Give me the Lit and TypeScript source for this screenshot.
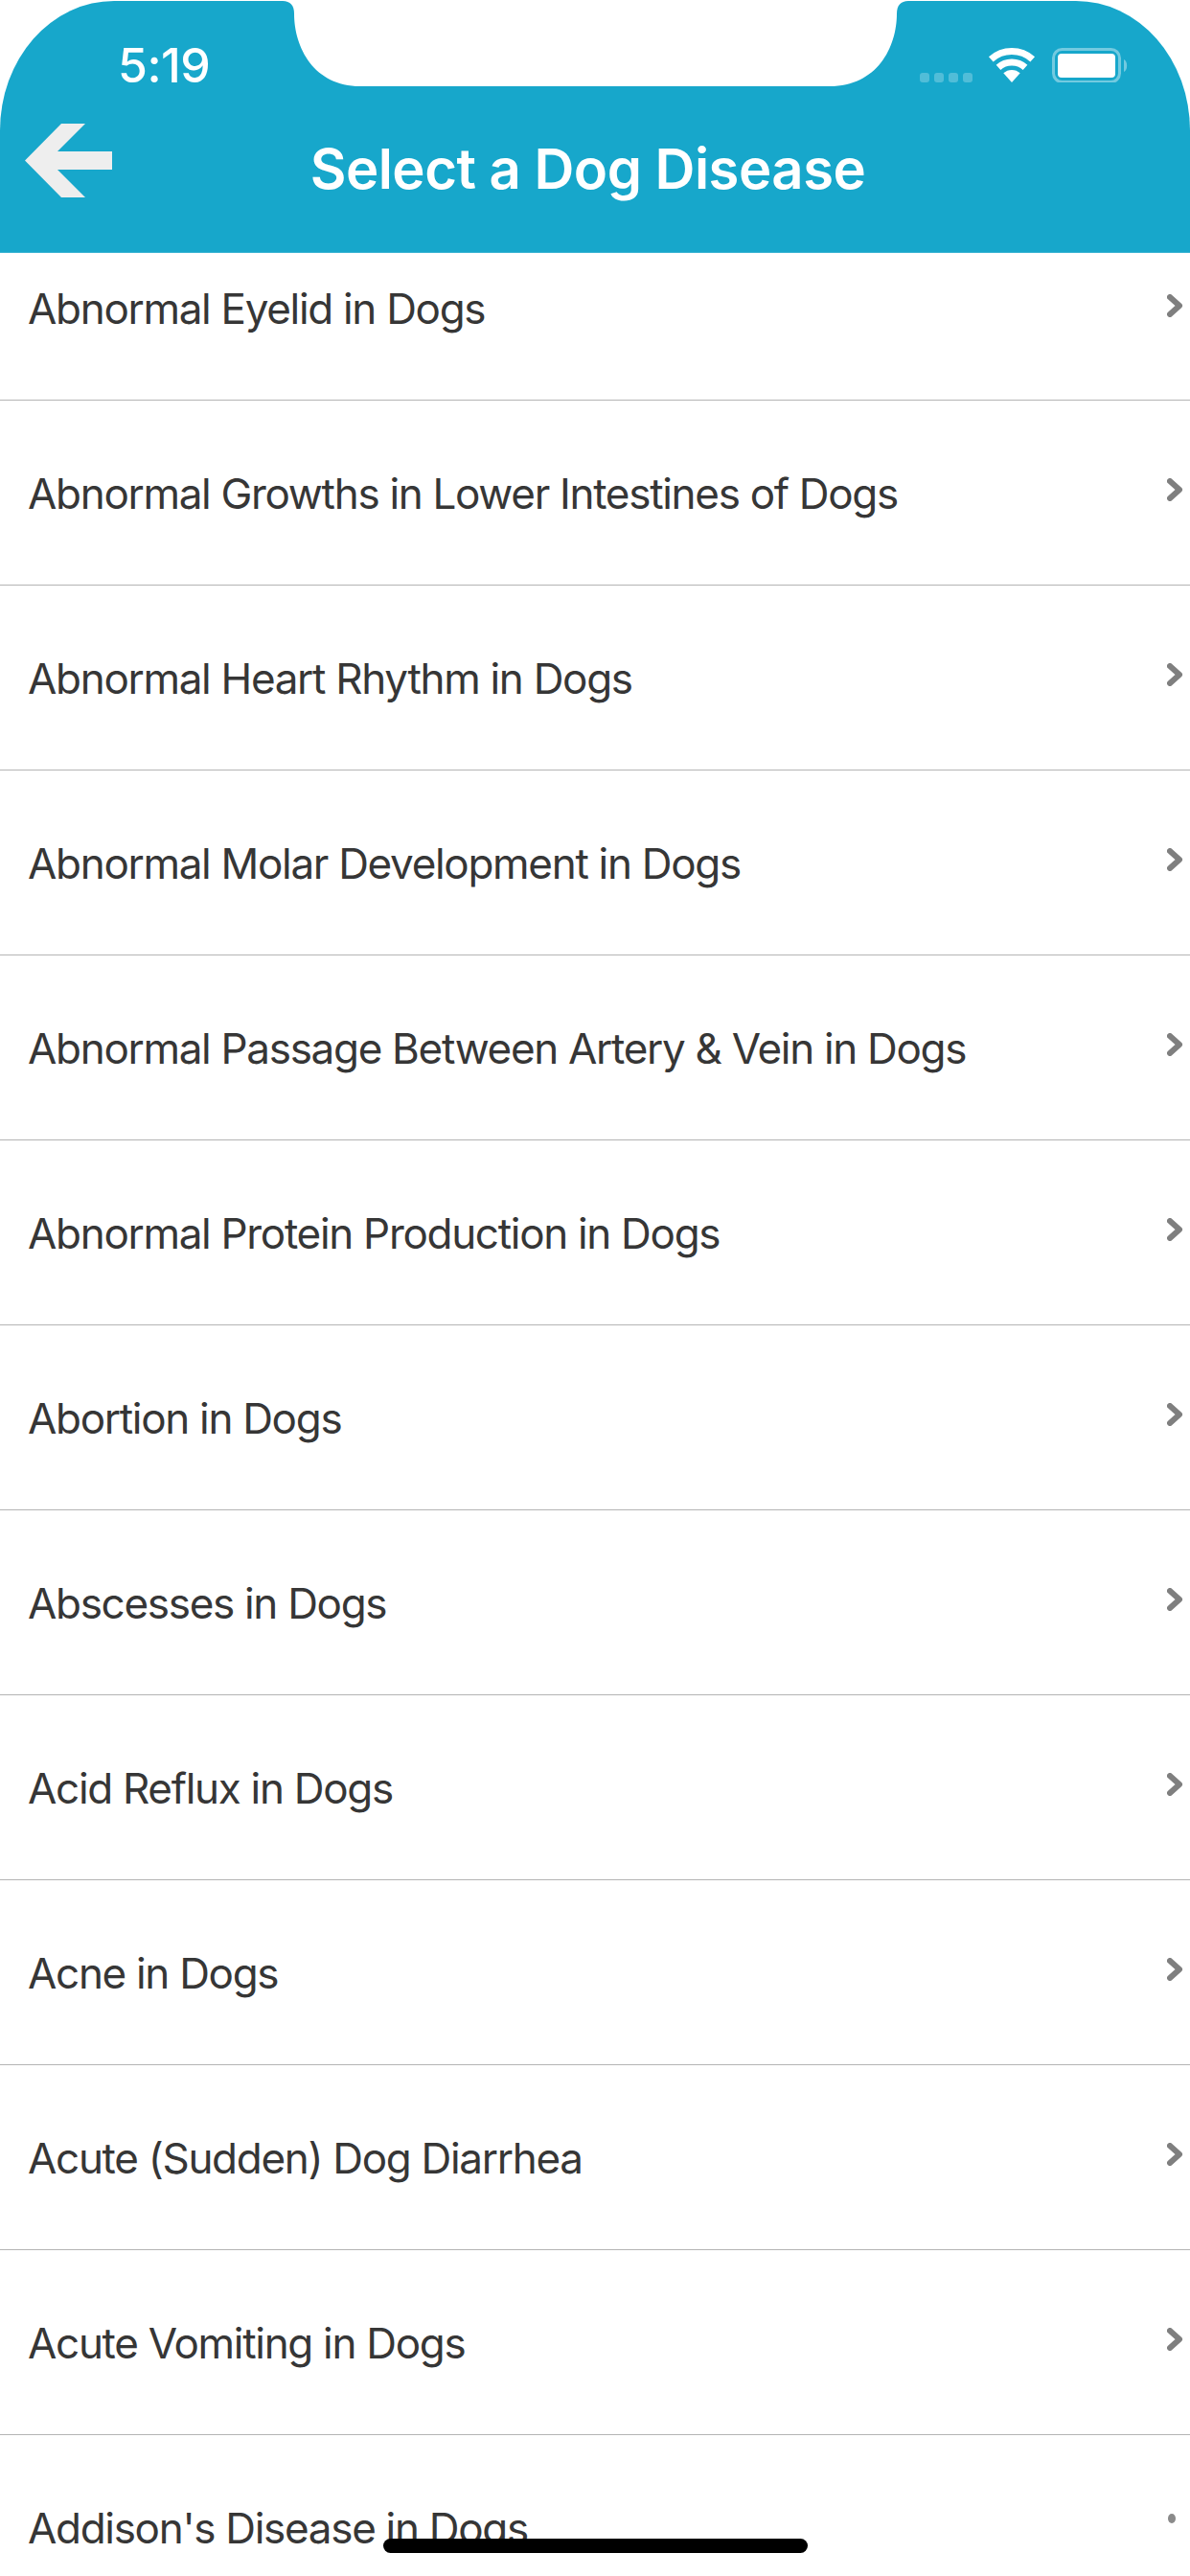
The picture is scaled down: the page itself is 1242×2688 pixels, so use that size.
import { LitElement, html, css, svg } from "lit";
import { customElement } from "lit/decorators.js";

const ITEMS = [
  "Abnormal Eyelid in Dogs",
  "Abnormal Growths in Lower Intestines of Dogs",
  "Abnormal Heart Rhythm in Dogs",
  "Abnormal Molar Development in Dogs",
  "Abnormal Passage Between Artery & Vein in Dogs",
  "Abnormal Protein Production in Dogs",
  "Abortion in Dogs",
  "Abscesses in Dogs",
  "Acid Reflux in Dogs",
  "Acne in Dogs",
  "Acute (Sudden) Dog Diarrhea",
  "Acute Vomiting in Dogs",
  "Addison's Disease in Dogs",
];

@customElement("app-root")
export class AppRoot extends LitElement {
  static styles = css`
    :host {
      display: block;
      position: relative;
      width: 1242px;
      height: 2688px;
      overflow: hidden;
      background: #fff;
      font-family: Inter, "Liberation Sans", sans-serif;
    }
    .header {
      position: relative;
      height: 262px;
      margin-top: 1px;
      background: #17a7cb;
      border-radius: 119px 119px 0 0 / 135px 135px 0 0;
      border-bottom: 1px solid #3fb5d3;
      display: flex;
      flex-direction: column;
    }
    .notch {
      position: absolute;
      left: 295px;
      top: -1px;
      width: 653px;
      height: 90px;
    }
    .status {
      height: 88px;
      position: relative;
      flex: none;
    }
    .time {
      position: absolute;
      left: 123px;
      top: 37px;
      font-size: 50px;
      line-height: 60px;
      font-weight: 500;
      color: #fff;
      letter-spacing: -0.5px;
    }
    .indicators {
      position: absolute;
      left: 960px;
      top: 47px;
      width: 218px;
      height: 38px;
    }
    .nav {
      flex: 1;
      position: relative;
      display: flex;
      justify-content: center;
    }
    .title {
      margin-top: 52px;
      margin-left: -15px;
      font-size: 58px;
      line-height: 70px;
      font-weight: 600;
      letter-spacing: -0.5px;
      color: #fff;
    }
    .back {
      position: absolute;
      left: 26px;
      top: 40px;
      width: 91px;
      height: 77px;
    }
    .list {
      height: 2424px;
      overflow: hidden;
    }
    .row {
      height: 192px;
      border-bottom: 1px solid #b4b4b4;
      display: flex;
      align-items: center;
      justify-content: space-between;
      padding: 0 7px 0 29px;
      color: #363636;
      font-size: 44px;
      letter-spacing: -1.3px;
      font-weight: 400;
    }
    .row:first-child {
      height: 153px;
      align-items: flex-start;
    }
    .row:first-child .label {
      margin-top: 31px;
    }
    .row:first-child .chev {
      margin-top: 43px;
    }
    .label {
      margin-top: 2px;
    }
    .chev {
      width: 17px;
      height: 24px;
      flex: none;
      margin-bottom: 6px;
    }
    .stub {
      width: 8px;
      height: 10px;
      flex: none;
      margin: 0 8px 18px 0;
      border-radius: 50%;
      background: #8a8a8a;
    }
    .home {
      position: absolute;
      left: 400px;
      top: 2649px;
      width: 443px;
      height: 15px;
      border-radius: 8px;
      background: #000;
    }
  `;

  render() {
    return html`
      <div class="header">
        <div class="status">
          <span class="time">5:19</span>
          <svg class="indicators" viewBox="0 0 218 38">
            ${[0, 1, 2, 3].map(
              (i) => svg`<rect x=${i * 15} y="28" width="10" height="10" rx="3" fill="#fff" fill-opacity="0.25"></rect>`
            )}
            <path d="M74.300 13.800 A32.500 32.500 0 0 1 117.700 13.800" fill="none" stroke="#fff" stroke-width="7"></path>
            <path d="M82 22.400 A21 21 0 0 1 110 22.400" fill="none" stroke="#fff" stroke-width="7"></path>
            <path d="M96 38 L87.300 28.300 A13 13 0 0 1 104.700 28.300 Z" fill="#fff"></path>
            <rect x="139.500" y="3.500" width="69" height="34" rx="9" fill="none" stroke="#fff" stroke-opacity="0.4" stroke-width="3"></rect>
            <rect x="144" y="8" width="60" height="25" rx="4" fill="#fff"></rect>
            <path d="M213 14 a5 7 0 0 1 0 13 Z" fill="#fff" fill-opacity="0.4"></path>
          </svg>
        </div>
        <div class="nav">
          <svg class="back" viewBox="0 0 91 77">
            <path d="M0 38.500 L38 0 L63 0 L34 29 L91 29 L91 48 L34 48 L63 77 L38 77 Z" fill="#eee"></path>
          </svg>
          <span class="title">Select a Dog Disease</span>
        </div>
        <svg class="notch" viewBox="0 0 653 90">
          <path d="M0 1 C8 1 12 6 12 14 C12 50 33 90 81 90 H571 C620 90 641 50 641 14 C641 6 645 1 653 1 V0 H0 Z" fill="#fff"></path>
        </svg>
      </div>
      <div class="list">
        ${ITEMS.map(
          (t, i) => html`<div class="row">
            <span class="label">${t}</span>
            ${i === ITEMS.length - 1
              ? html`<span class="stub"></span>`
              : html`<svg class="chev" viewBox="0 0 17 24">
                  <path d="M3 3 L13 12 L3 21" fill="none" stroke="#7f7f7f" stroke-width="6" stroke-linejoin="round" stroke-linecap="round"></path>
                </svg>`}
          </div>`
        )}
      </div>
      <div class="home"></div>
    `;
  }
}
